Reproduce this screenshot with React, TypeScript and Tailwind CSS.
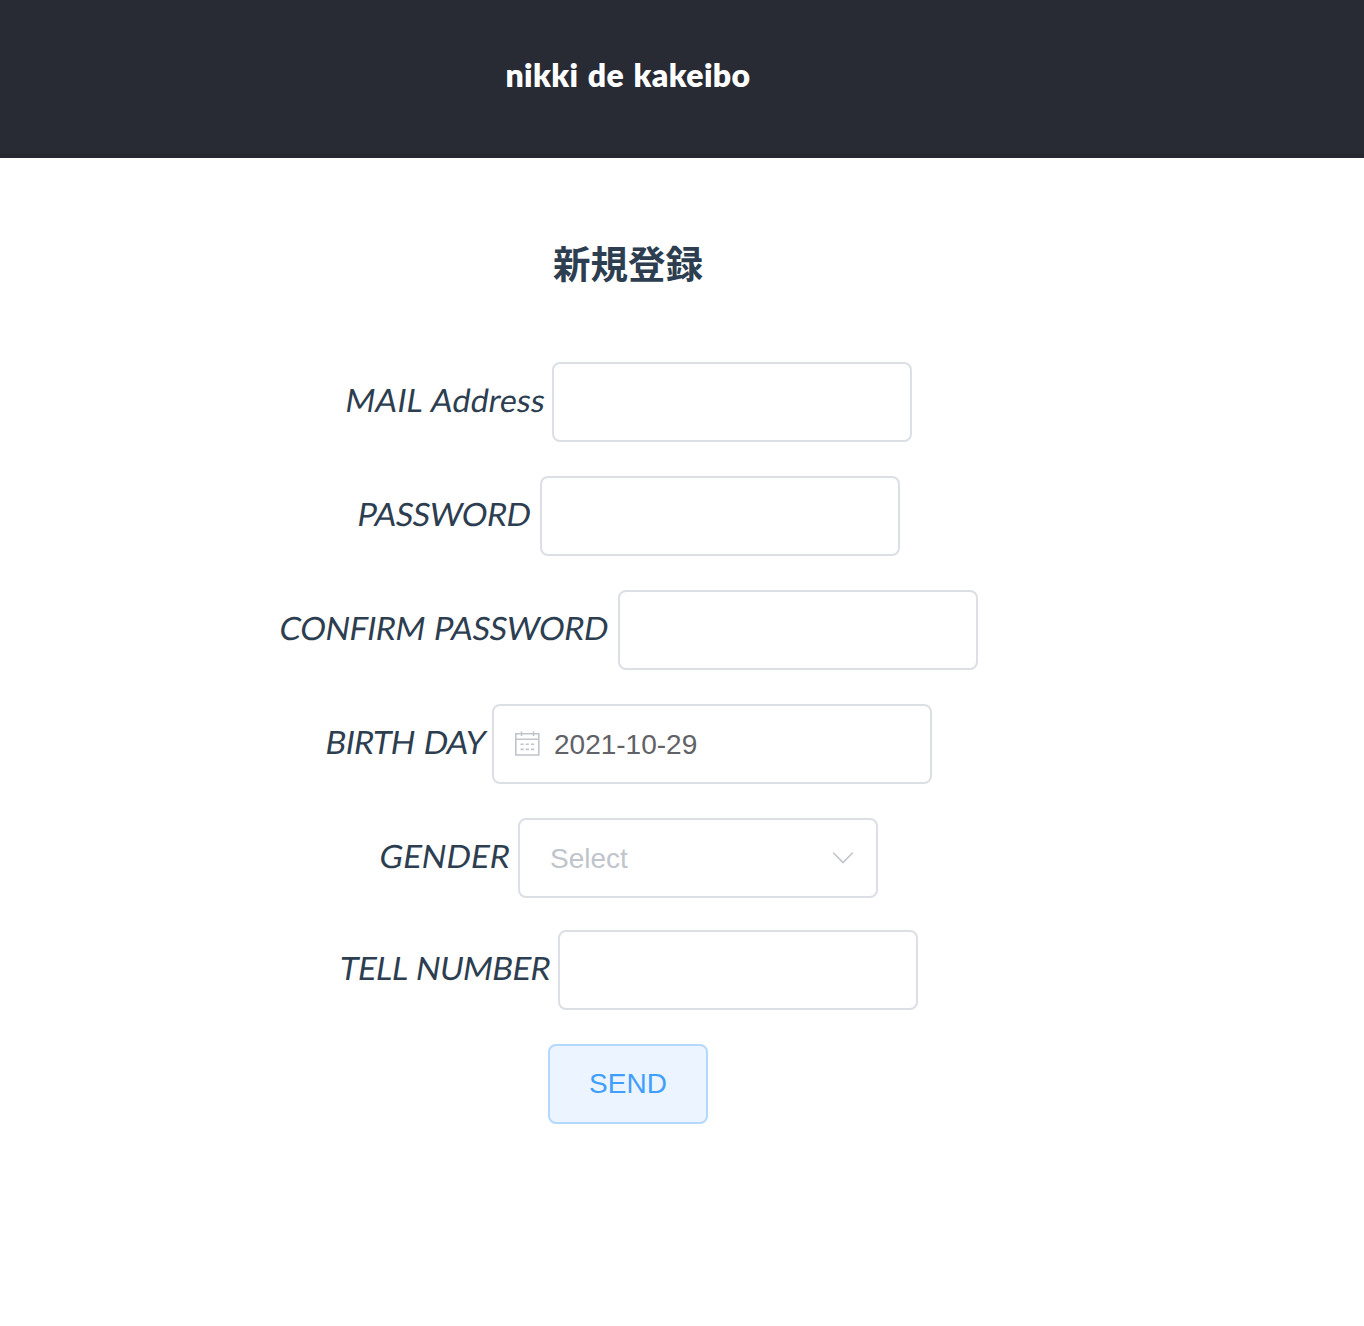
import type { ReactNode } from "react";

const box = "h-20 shrink-0 rounded-lg border-2 border-[#dcdfe6] bg-white";

function Row({ label, width, tracking, gap = "mb-[34px]", children }: { label: string; width: string; tracking: string; gap?: string; children: ReactNode }) {
  return (
    <div className={`flex h-20 justify-center ${gap}`}>
      <label className={`${width} shrink-0 whitespace-nowrap pt-[18px] pl-0.5 text-[32px] leading-[40px]`}>
        <span className={`inline-block -skew-x-[9deg] [word-spacing:1.5px] ${tracking}`}>{label}</span>
      </label>
      {children}
    </div>
  );
}

export default function App() {
  return (
    <div className="min-h-[1326px] w-full bg-white font-['Lato',sans-serif] text-[#2c3e50]">
      <header className="h-[158px] border-b-4 border-[#272731] bg-[#282b34]">
        <h1 className="w-[1256px] pt-[55px] text-center text-[32px] leading-[40px] font-extrabold text-white">
          <span className="tracking-[0.4px] [word-spacing:1.5px]">nikki de kakeibo</span>
        </h1>
      </header>
      <main className="w-[1256px]">
        <h2 className="mb-[72px] pt-[76px] text-center font-['Noto_Sans_CJK_JP',sans-serif] text-[37.5px] leading-[56px] font-bold">新規登録</h2>
        <form onSubmit={(e) => e.preventDefault()}>
          <Row label="MAIL Address" width="w-[208px]" tracking="tracking-[0.2px]">
            <input type="email" className={`${box} w-[360px]`} />
          </Row>
          <Row label="PASSWORD" width="w-[184px]" tracking="tracking-[-0.5px]">
            <input type="password" className={`${box} w-[360px]`} />
          </Row>
          <Row label="CONFIRM PASSWORD" width="w-[340px]" tracking="tracking-[-0.37px]">
            <input type="password" className={`${box} w-[360px]`} />
          </Row>
          <Row label="BIRTH DAY" width="w-[168px]" tracking="tracking-[-0.65px]">
            <div className={`${box} flex w-[440px] items-center pl-5`}>
              <svg className="mr-[13px] h-[28px] w-[27px]" viewBox="0 0 27 28" fill="none" stroke="#c0c4cc" strokeWidth="1.6">
                <path d="M1.8 3.8h23v21.2h-23zM1.8 9.2h23M7.5 1.5v4.6M19.5 1.5v4.6" />
                <path d="M6.5 14.3h3.2M11.7 14.3h3.2M17 14.3h3.2M6.5 19.4h3.2M11.7 19.4h3.2M17 19.4h3.2" />
              </svg>
              <span className="pt-0.5 font-['Liberation_Sans',sans-serif] text-[28px] leading-8 text-[#606266]">2021-10-29</span>
            </div>
          </Row>
          <Row label="GENDER" width="w-[140px]" tracking="tracking-[0.2px]" gap="mb-8">
            <div className={`${box} flex w-[360px] items-center justify-between pr-[22px] pl-[30px]`}>
              <span className="pt-0.5 font-['Liberation_Sans',sans-serif] text-[28px] leading-8 text-[#c0c4cc]">Select</span>
              <svg className="h-3 w-[22px]" viewBox="0 0 22 12" fill="none" stroke="#c0c4cc" strokeWidth="1.6" strokeLinecap="round">
                <path d="M1.6 1 11 10.5 20.4 1" />
              </svg>
            </div>
          </Row>
          <Row label="TELL NUMBER" width="w-[220px]" tracking="tracking-[-0.5px]">
            <input type="tel" className={`${box} w-[360px]`} />
          </Row>
          <div className="flex justify-center">
            <button className="h-20 w-40 rounded-lg border-2 border-[#b3d8ff] bg-[#ecf5ff] font-['Liberation_Sans',sans-serif] text-[28px] leading-8 text-[#409eff]">SEND</button>
          </div>
        </form>
      </main>
    </div>
  );
}
